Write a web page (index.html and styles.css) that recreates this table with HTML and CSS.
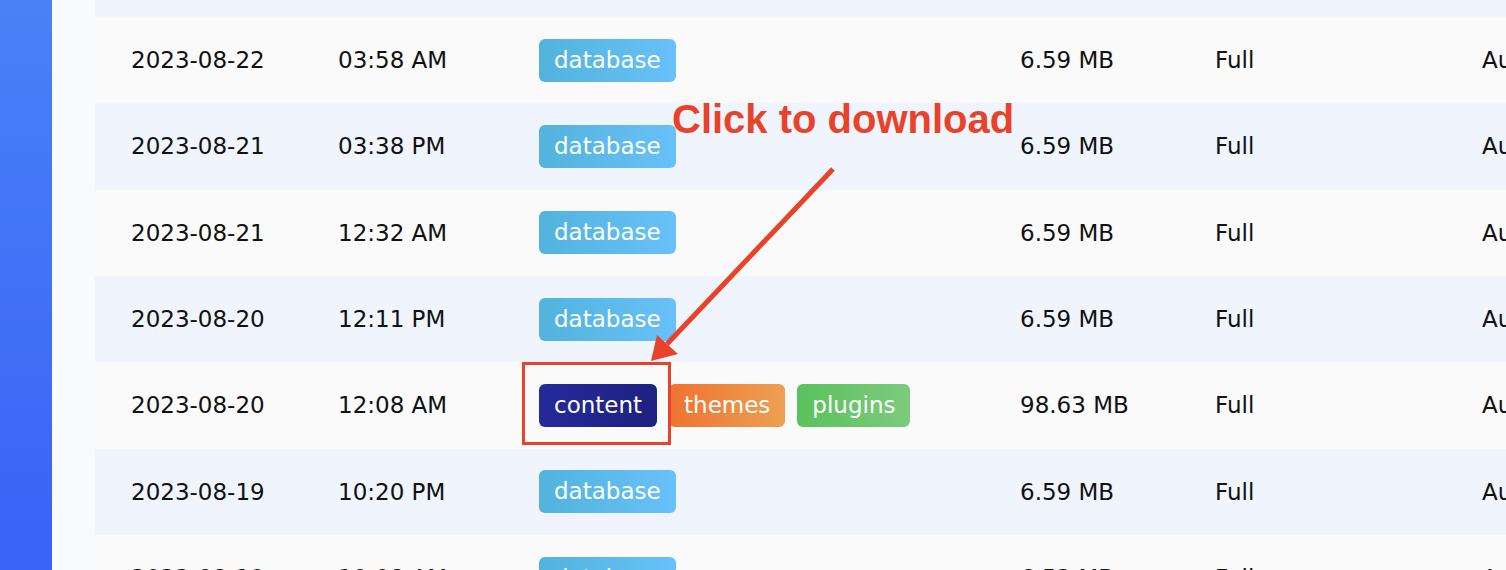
FILE: index.html
```html
<!DOCTYPE html>
<html>
  <head>
    <title>Backups</title>
    <link rel="stylesheet" href="styles.css">
  </head>
  <body>
    <div class="page">
      <aside class="sidebar"></aside>
      <div class="gutter"></div>
      <main class="main">
        <div class="backups">
          <div class="row top"></div>
          <div class="row">
            <span>2023-08-22</span><span>03:58 AM</span>
            <span class="tags"><span class="tag db">database</span></span>
            <span>6.59 MB</span><span>Full</span><span class="cut">Automatic</span>
          </div>
          <div class="row">
            <span>2023-08-21</span><span>03:38 PM</span>
            <span class="tags"><span class="tag db">database</span></span>
            <span>6.59 MB</span><span>Full</span><span class="cut">Automatic</span>
          </div>
          <div class="row">
            <span>2023-08-21</span><span>12:32 AM</span>
            <span class="tags"><span class="tag db">database</span></span>
            <span>6.59 MB</span><span>Full</span><span class="cut">Automatic</span>
          </div>
          <div class="row">
            <span>2023-08-20</span><span>12:11 PM</span>
            <span class="tags"><span class="tag db">database</span></span>
            <span>6.59 MB</span><span>Full</span><span class="cut">Automatic</span>
          </div>
          <div class="row">
            <span>2023-08-20</span><span>12:08 AM</span>
            <span class="tags">
              <span class="tag content">content</span>
              <span class="tag themes">themes</span>
              <span class="tag plugins">plugins</span>
            </span>
            <span>98.63 MB</span><span>Full</span><span class="cut">Automatic</span>
          </div>
          <div class="row">
            <span>2023-08-19</span><span>10:20 PM</span>
            <span class="tags"><span class="tag db">database</span></span>
            <span>6.59 MB</span><span>Full</span><span class="cut">Automatic</span>
          </div>
          <div class="row">
            <span>2023-08-19</span><span>10:08 AM</span>
            <span class="tags"><span class="tag db">database</span></span>
            <span>6.53 MB</span><span>Full</span><span class="cut">Automatic</span>
          </div>
        </div>
      </main>
    </div>

    <!-- annotation drawn over the screenshot -->
    <div class="note">Click to download</div>
    <svg class="markup" width="1506" height="570" viewBox="0 0 1506 570">
      <rect x="523.5" y="363.5" width="146" height="80" fill="none" stroke="#e8432a" stroke-width="3"/>
      <line x1="833" y1="169" x2="667" y2="344" stroke="#e8432a" stroke-width="5"/>
      <polygon points="651,361 657,335 678,354" fill="#e8432a"/>
    </svg>
  </body>
</html>
```

FILE: styles.css
```css
body { margin: 0; overflow: hidden; font-family: "DejaVu Sans", "Noto Sans", sans-serif; color: #111; }

.page { display: flex; height: 570px; }
.sidebar { width: 52px; flex: none; background: linear-gradient(180deg, #4a81f8 0%, #3962f6 100%); }
.gutter { width: 43px; flex: none; background: #f9fafe; }
.main { flex: 1; overflow: hidden; }

.row {
  display: grid;
  grid-template-columns: 207px 201px 481px 195px 267px 1fr;
  align-items: center;
  height: 86.33px;
  padding-left: 36px;
  font-size: 23px;
  background: #f0f4fc;
}
.row:nth-child(even) { background: #fafafa; }
.row.top { height: 17px; }
.cut { white-space: nowrap; overflow: hidden; }

.tags { display: flex; gap: 12px; }
.tag { height: 43px; line-height: 43px; padding: 0 15px; border-radius: 6px; color: #fff; }
.db { background: linear-gradient(90deg, #52b3dd, #68c1f9); }
.content { background: linear-gradient(90deg, #242a9a, #1e2180); }
.themes { background: linear-gradient(90deg, #ee7331, #eda052); }
.plugins { background: linear-gradient(90deg, #5bc25b, #7cca7e); }

.note {
  position: absolute; left: 672px; top: 99px;
  font-family: "Liberation Sans", Arial, sans-serif; font-weight: bold; font-size: 40px; line-height: 1;
  color: #e8432a;
}
.markup { position: absolute; left: 0; top: 0; }
```
